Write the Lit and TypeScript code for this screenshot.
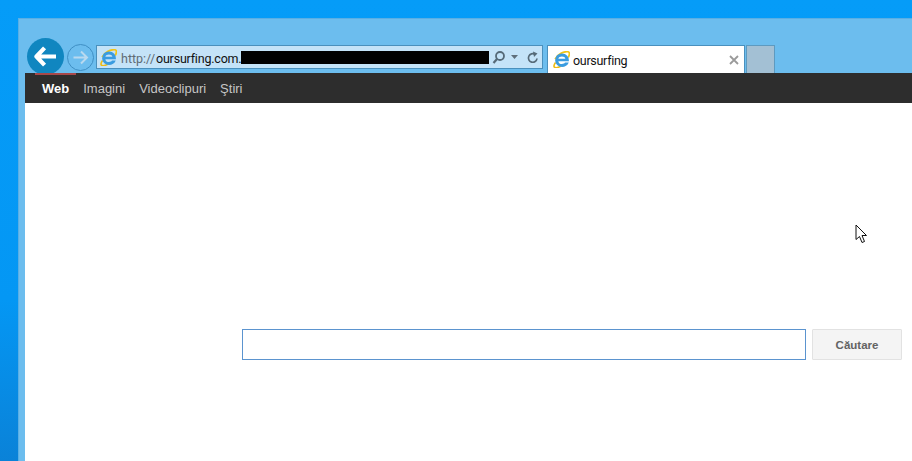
import { LitElement, html, css } from "lit";
import { customElement } from "lit/decorators.js";

const ie = (size: number) => html`<svg class="ie" width=${size} height=${size} viewBox="0 0 20 20">
  <path d="M2.500 9.500C5.500 3.500 13 .3 17.500 .9c2.500.4 2.200 3.700.4 6.800" fill="none" stroke="#f2c414" stroke-width="2"/>
  <path d="M3 13.500C.8 16.500.5 19 2.500 19.500 4.500 20 7.500 18.800 9.500 17.800" fill="none" stroke="#eebb14" stroke-width="1.900"/>
  <path d="M10.500 2.800a8.200 8.200 0 0 1 8.300 9.200H6.300c.2 2.300 2.100 3.300 4.200 3.300 1.800 0 2.900-.5 3.600-1.700h4.400c-1.200 3.400-4.400 5.200-8 5.200a8 8 0 0 1 0-16Zm-4.200 6.400h8.200c-.2-1.800-1.800-2.800-4-2.800-2.100 0-3.800 1-4.200 2.800Z" fill="#3a9ce0" fill-rule="evenodd"/>
</svg>`;

@customElement("app-root")
export class AppRoot extends LitElement {
  static styles = css`
    :host { display: block; width: 912px; height: 461px; overflow: hidden; position: relative;
      background: linear-gradient(180deg, #059cf8 0%, #0497f4 65%, #0a82d8 100%); }
    .window { margin: 18px 0 0 18px; height: 443px; background: #6cbdee; display: flex; flex-direction: column;
      border-top: 1px solid #5aaee4; border-left: 1px solid #5aaee4; box-sizing: border-box; }
    .toolbar { height: 54px; flex: none; display: flex; align-items: flex-start; padding: 26px 0 0 6px; box-sizing: border-box; }
    .back { width: 37px; height: 37px; border-radius: 50%; background: #1086c0; flex: none; display: flex; align-items: center; justify-content: center; margin: -7px 0 0 2px; }
    .forward { width: 25px; height: 25px; border-radius: 50%; border: 1px solid #3f8fc4; flex: none; display: flex; align-items: center; justify-content: center; margin: -1px 2px 0 3px; }
    .address { width: 447px; height: 24px; box-sizing: border-box; border: 1px solid #4a90bd; background: #c4e3f8; display: flex; align-items: center; flex: none; padding-left: 3px;
      font: 12.500px Roboto, "Noto Sans", sans-serif; color: #111; font-variant-ligatures: none; }
    .address .ie { flex: none; margin-right: 4px; }
    .scheme { color: #5f6b74; width: 35px; flex: none; padding-top: 2px; }
    .host-text { width: 85px; flex: none; white-space: nowrap; padding-top: 2px; letter-spacing: -0.2px; }
    .redact { width: 248px; height: 13px; background: #000; flex: none; margin-right: 3px; }
    .tools { display: flex; align-items: center; gap: 4px; }
    .tab { width: 198px; height: 28px; margin-left: 4px; flex: none; box-sizing: border-box; background: #fff; border: 1px solid #4a90bd; border-bottom: none; display: flex; align-items: center; padding: 0 5px;
      font: 12.500px Roboto, "Noto Sans", sans-serif; color: #111; font-variant-ligatures: none; }
    .tab .ie { margin-right: 3px; flex: none; }
    .tab .label { flex: 1; letter-spacing: -0.3px; padding-top: 2px; }
    .close { display: flex; }
    .newtab { width: 29px; height: 28px; flex: none; box-sizing: border-box; margin-left: 1px; background: #a3c0d4; border: 1px solid #5d9ac0; border-bottom: none; }
    .page { flex: 1; background: #fff; margin-left: 6px; display: flex; flex-direction: column; position: relative; }
    .nav { height: 30px; background: #2d2d2d; flex: none; display: flex; align-items: center; padding-left: 17px; gap: 14px; position: relative;
      font: 13px "Liberation Sans", Arial, sans-serif; color: #c6c6c6; }
    .nav b { color: #fff; }
    .red { position: absolute; left: 10px; top: 0; width: 41px; height: 2px; background: #a8484a; }
    .search { display: flex; margin: 226px 0 0 217px; gap: 6px; }
    .input { width: 564px; height: 31px; box-sizing: border-box; border: 1px solid #5b94cf; background: #fff; }
    .btn { width: 90px; height: 31px; box-sizing: border-box; border: 1px solid #e2e2e2; background: #f4f4f4; border-radius: 1px; display: flex; align-items: center; justify-content: center;
      font: bold 11.500px "Liberation Sans", Arial, sans-serif; color: #636363; }
    .cursor { position: absolute; left: 855px; top: 224px; z-index: 5; }
  `;

  render() {
    return html`
      <div class="window">
        <div class="toolbar">
          <div class="back">
            <svg width="23" height="21" viewBox="0 0 24 22"><path d="M11 2 2.500 11 11 20M3 11H23" fill="none" stroke="#fff" stroke-width="4.400" stroke-linejoin="round"/></svg>
          </div>
          <div class="forward">
            <svg width="17" height="15" viewBox="0 0 17 15"><path d="M9 1.500 15 7.500 9 13.500M15 7.500H1.500" fill="none" stroke="#b9d9ef" stroke-width="2"/></svg>
          </div>
          <div class="address">
            ${ie(17)}
            <span class="scheme">http://</span><span class="host-text">oursurfing.com.</span><span class="redact"></span>
            <div class="tools">
              <svg width="14" height="15" viewBox="0 0 14 15"><circle cx="8" cy="6" r="4" fill="none" stroke="#566a78" stroke-width="1.800"/><path d="M5 9 1.500 13" stroke="#566a78" stroke-width="2.200"/></svg>
              <svg width="9" height="6" viewBox="0 0 9 6"><path d="M1 1h7L4.500 5Z" fill="#5f6f7b"/></svg>
              <svg width="13" height="15" viewBox="0 0 13 15" style="margin-left:3px"><path d="M11 8.500a4.300 4.300 0 1 1-2-4.200" fill="none" stroke="#566a78" stroke-width="1.700"/><path d="M7 1.500 11.500 3.500 8 7Z" fill="#566a78"/></svg>
            </div>
          </div>
          <div class="tab">
            ${ie(17)}
            <span class="label">oursurfing</span>
            <span class="close"><svg width="10" height="10" viewBox="0 0 10 10"><path d="M1 1l8 8M9 1l-8 8" stroke="#9a9a9a" stroke-width="1.800"/></svg></span>
          </div>
          <div class="newtab"></div>
        </div>
        <div class="page">
          <nav class="nav">
            <div class="red"></div>
            <b>Web</b><span>Imagini</span><span>Videoclipuri</span><span>Ştiri</span>
          </nav>
          <div class="search">
            <div class="input"></div>
            <div class="btn">Căutare</div>
          </div>
        </div>
      </div>
      <svg class="cursor" width="14" height="21" viewBox="0 0 14 21">
        <path d="M1 1V15.500L4.500 12.500 7 18.500 9.500 17.500 7 11.500H11.500Z" fill="#fff" stroke="#111" stroke-width="1"/>
      </svg>
    `;
  }
}
